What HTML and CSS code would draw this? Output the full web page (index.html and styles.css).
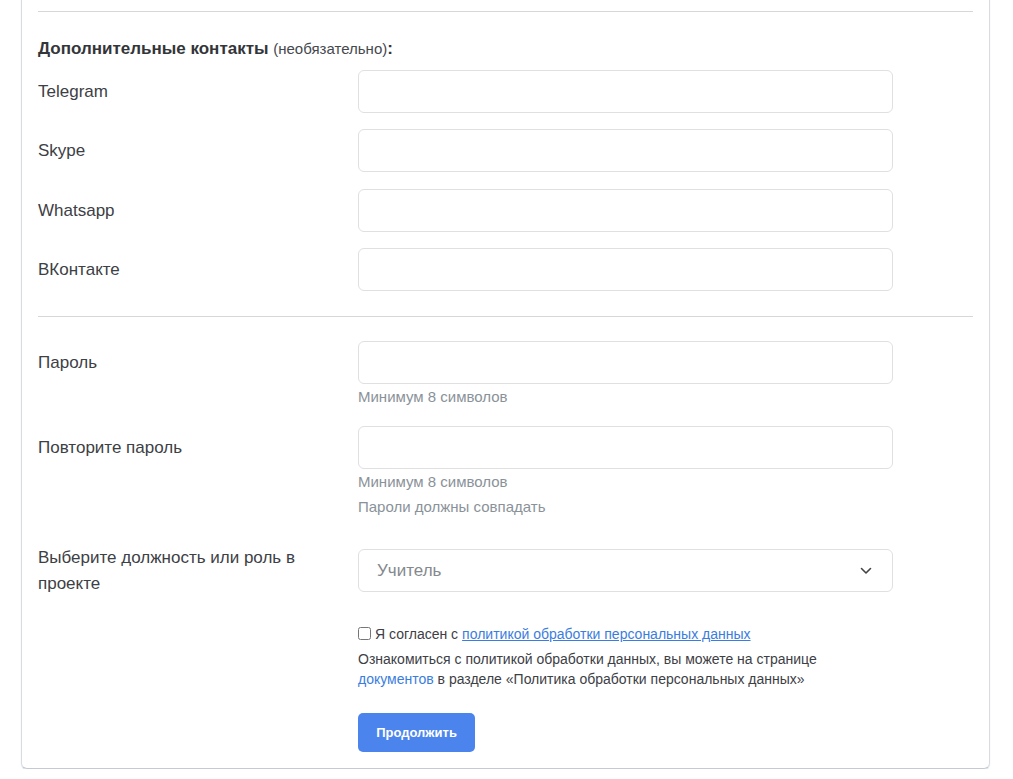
FILE: index.html
```html
<!DOCTYPE html>
<html lang="ru">
<head>
<meta charset="utf-8">
<title>Регистрация</title>
<link rel="stylesheet" href="styles.css">
</head>
<body>
<div class="card">
  <hr class="divider">
  <h3 class="section-title">Дополнительные контакты <span class="optional">(необязательно)</span>:</h3>
  <div class="contacts">
    <div class="row"><label class="label">Telegram</label><div class="control"><input class="input" type="text"></div></div>
    <div class="row"><label class="label">Skype</label><div class="control"><input class="input" type="text"></div></div>
    <div class="row"><label class="label">Whatsapp</label><div class="control"><input class="input" type="text"></div></div>
    <div class="row"><label class="label">ВКонтакте</label><div class="control"><input class="input" type="text"></div></div>
  </div>
  <hr class="divider divider-mid">
  <div class="row row-pass">
    <label class="label">Пароль</label>
    <div class="control">
      <input class="input" type="password">
      <div class="help">Минимум 8 символов</div>
    </div>
  </div>
  <div class="row row-pass2">
    <label class="label">Повторите пароль</label>
    <div class="control">
      <input class="input" type="password">
      <div class="help">Минимум 8 символов</div>
      <div class="help">Пароли должны совпадать</div>
    </div>
  </div>
  <div class="row row-role">
    <label class="label label-2">Выберите должность или роль в проекте</label>
    <div class="control">
      <div class="select">
        <span class="select-value">Учитель</span>
        <svg class="chevron" width="12" height="8" viewBox="0 0 12 8"><path d="M1.5 1.5 L6 6 L10.5 1.5" fill="none" stroke="#444" stroke-width="1.6" stroke-linecap="round" stroke-linejoin="round"/></svg>
      </div>
    </div>
  </div>
  <div class="agree">
    <label class="agree-line"><input class="checkbox" type="checkbox"> Я согласен с <a class="link link-u" href="#">политикой обработки персональных данных</a></label>
    <p class="agree-note">Ознакомиться с политикой обработки данных, вы можете на странице<br><a class="link" href="#">документов</a> в разделе «Политика обработки персональных данных»</p>
    <button class="btn" type="button">Продолжить</button>
  </div>
</div>
</body>
</html>
```

FILE: styles.css
```css
html, body {
  margin: 0;
  padding: 0;
  background: #ffffff;
}
body {
  font-family: "Liberation Sans", Arial, sans-serif;
  color: #3d4045;
}
.card {
  margin: -1px 0 0 21px;
  width: 935px;
  padding: 11px 16px 16px 16px;
  border: 1px solid #d8dbe2;
  border-bottom-color: #c3c9d6;
  border-radius: 0 0 6px 6px;
  box-shadow: 0 1px 1px rgba(150, 165, 195, 0.35);
}
.divider {
  margin: 0;
  border: 0;
  height: 1px;
  background: #d7d7d7;
}
.section-title {
  margin: 25px 0 0 0;
  height: 24px;
  font-size: 17px;
  line-height: 24px;
  font-weight: bold;
  color: #333539;
  white-space: nowrap;
}
.optional {
  font-weight: normal;
  font-size: 15px;
  line-height: 1;
  color: #45484d;
}
.contacts {
  margin-top: 9px;
  display: flex;
  flex-direction: column;
  gap: 16.333px;
}
.row {
  display: flex;
  align-items: flex-start;
}
.label {
  width: 320px;
  flex: 0 0 320px;
  font-size: 17px;
  line-height: 24px;
  padding-top: 10px;
  color: #3d4045;
}
.control {
  width: 535px;
  display: flex;
  flex-direction: column;
}
.input {
  box-sizing: border-box;
  width: 535px;
  height: 43px;
  margin: 0;
  border: 1px solid #e0e0e0;
  border-radius: 6px;
  background: #fff;
  font-family: inherit;
  font-size: 17px;
  padding: 0 16px;
  outline: none;
}
.divider-mid {
  margin-top: 25px;
}
.row-pass {
  margin-top: 24px;
}
.row-pass2 {
  margin-top: 17px;
}
.help {
  font-size: 15px;
  line-height: 25px;
  color: #8a9299;
}
.row-role {
  margin-top: 26px;
  align-items: center;
}
.label-2 {
  line-height: 26px;
  padding-top: 0;
  padding-right: 40px;
  width: 280px;
  flex-basis: 280px;
}
.select {
  box-sizing: border-box;
  width: 535px;
  height: 43px;
  border: 1px solid #e0e0e0;
  border-radius: 6px;
  display: flex;
  align-items: center;
  justify-content: space-between;
  padding: 0 20px 0 18px;
}
.select-value {
  font-size: 17px;
  color: #85898e;
}
.chevron {
  display: block;
}
.agree {
  margin-left: 320px;
  margin-top: 27px;
  font-size: 14px;
  color: #3d4045;
}
.agree-line {
  display: flex;
  align-items: center;
  line-height: 20px;
  gap: 4px;
}
.checkbox {
  margin: 0;
  width: 13px;
  height: 13px;
}
.link {
  color: #3b7ddd;
  text-decoration: none;
}
.link-u {
  text-decoration: underline;
}
.agree-note {
  margin: 5px 0 0 0;
  line-height: 20px;
}
.btn {
  margin-top: 24px;
  display: block;
  box-sizing: border-box;
  width: 117px;
  height: 39px;
  border: 0;
  border-radius: 5px;
  background: #4a84ec;
  color: #fff;
  font-family: inherit;
  font-size: 13px;
  font-weight: bold;
  cursor: pointer;
}
```
